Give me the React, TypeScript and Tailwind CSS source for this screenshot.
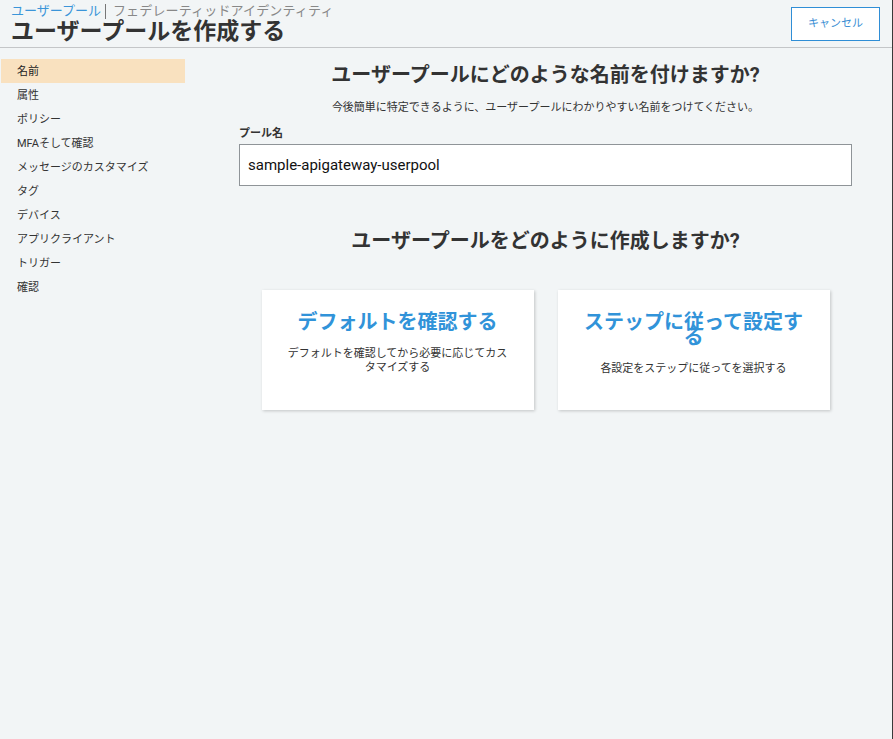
import React from "react";

const font = { fontFamily: 'Roboto, "Noto Sans CJK JP", sans-serif' };

const navItems = [
  "名前",
  "属性",
  "ポリシー",
  "MFAそして確認",
  "メッセージのカスタマイズ",
  "タグ",
  "デバイス",
  "アプリクライアント",
  "トリガー",
  "確認",
];

export default function App() {
  return (
    <div
      className="w-[893px] h-[739px] bg-[#f2f5f6] text-[#333] flex overflow-hidden"
      style={font}
    >
      <div className="w-[892px] flex flex-col">
        <header className="h-[48px] border-b border-[#c4c6c8] flex justify-between pl-[11px] pr-[12px]">
          <div className="flex flex-col">
            <div className="flex items-center text-[13px] leading-[16px] pt-[3px]">
              <span className="text-[#3b95d9]">ユーザープール</span>
              <span className="w-px h-[15px] bg-[#777] mx-[4px]"></span>
              <span className="text-[#888] ml-[3px] tracking-[0.15px]">フェデレーティッドアイデンティティ</span>
            </div>
            <h1 className="text-[23px] leading-[26px] font-bold text-[#333] mt-0">
              ユーザープールを作成する
            </h1>
          </div>
          <button className="mt-[7px] w-[89px] h-[34px] border border-[#2f8ed6] bg-white text-[#3b8fd4] text-[11px]">
            キャンセル
          </button>
        </header>
        <div className="flex flex-1">
          <nav className="w-[199px] pt-[11px]">
            {navItems.map((item, i) => (
              <div
                key={item}
                className={
                  "ml-[1px] w-[184px] h-[24px] flex items-center pl-[16px] pt-[2px] text-[11px] " +
                  (i === 0 ? "bg-[#f9e1bf] text-[#222]" : "text-[#333]")
                }
              >
                {item}
              </div>
            ))}
          </nav>
          <main className="flex-1 flex flex-col items-center">
            <h2 className="mt-[14px] text-[20px] leading-[26px] font-bold text-[#333]">
              ユーザープールにどのような名前を付けますか?
            </h2>
            <p className="mt-[13px] text-[11px] leading-[14px] text-[#333]">
              今後簡単に特定できるように、ユーザープールにわかりやすい名前をつけてください。
            </p>
            <div className="mt-[12px] w-[613px]">
              <label className="block text-[11px] leading-[14px] font-bold text-[#333]">
                プール名
              </label>
              <div className="mt-[3px] h-[42px] border border-[#8f9498] bg-white flex items-center pl-[8px] text-[15px] text-[#111]">
                sample-apigateway-userpool
              </div>
            </div>
            <h2 className="mt-[42px] text-[20px] leading-[26px] font-bold text-[#333]">
              ユーザープールをどのように作成しますか?
            </h2>
            <div className="mt-[36px] flex gap-[24px]">
              <div className="w-[272px] h-[120px] bg-white shadow-[1px_1px_3px_rgba(0,0,0,0.2)] px-[24px] pt-[21px] text-center">
                <div className="text-[20px] leading-[22px] font-bold text-[#3193d9]">
                  デフォルトを確認する
                </div>
                <p className="mt-[14px] text-[11px] leading-[14px] text-[#333]">
                  デフォルトを確認してから必要に応じてカスタマイズする
                </p>
              </div>
              <div className="w-[272px] h-[120px] bg-white shadow-[1px_1px_3px_rgba(0,0,0,0.2)] px-[24px] pt-[21px] text-center">
                <div className="text-[20px] leading-[15px] font-bold text-[#3193d9] pt-[4px]">
                  ステップに従って設定する
                </div>
                <p className="mt-[17px] text-[11px] leading-[14px] text-[#333]">
                  各設定をステップに従ってを選択する
                </p>
              </div>
            </div>
          </main>
        </div>
      </div>
      <div className="w-px h-full bg-[#3a3a3a]"></div>
    </div>
  );
}
